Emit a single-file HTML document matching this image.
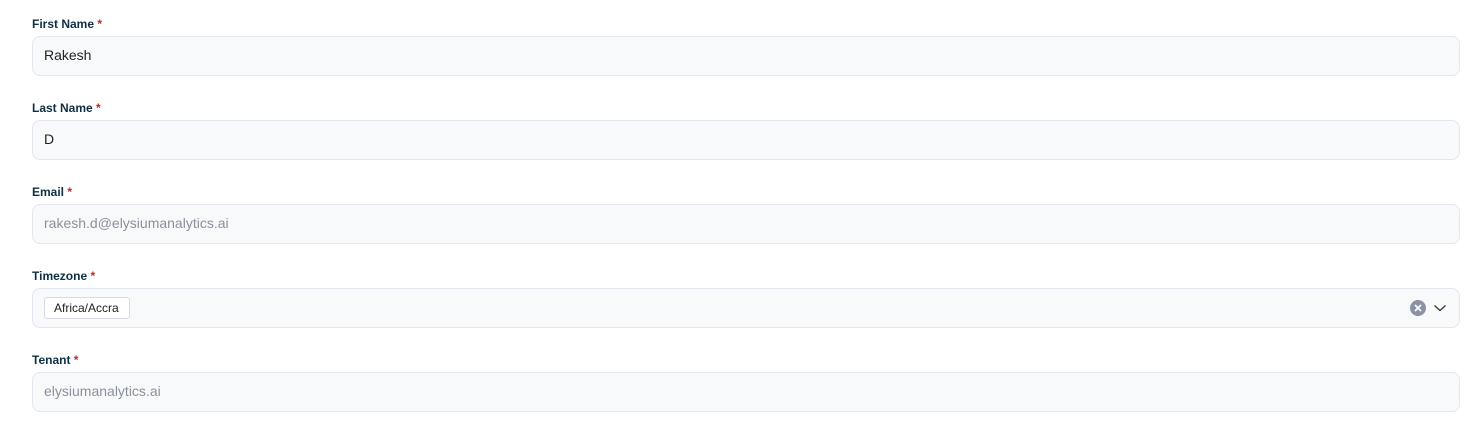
<!DOCTYPE html>
<html><head><style>
body{margin:0;background:#fff;font-family:"Liberation Sans",Arial,sans-serif;width:1470px;height:430px;overflow:hidden}
.f{position:absolute;left:32px;width:1428px}
.l{font-size:12px;font-weight:bold;color:#0f2f45;height:14px;line-height:14px}
.l span{color:#c0262d}
.i{position:absolute;top:19px;left:0;height:38px;border:1px solid #e3e5ee;border-radius:8px;background:#f8f9fb;font-size:14px;line-height:37px;padding-left:11px;box-sizing:content-box;width:1415px;color:#222}
.g{color:#8b919b}
.tag{position:absolute;left:11px;top:8px;height:20px;line-height:20px;border:1px solid #d8dbe3;border-radius:3px;background:#fff;font-size:12px;padding:0 10px 0 9px;color:#222}
</style></head><body>
<div class="f" style="top:17px"><div class="l">First Name <span>*</span></div><div class="i">Rakesh</div></div>
<div class="f" style="top:101px"><div class="l">Last Name <span>*</span></div><div class="i">D</div></div>
<div class="f" style="top:185px"><div class="l">Email <span>*</span></div><div class="i g">rakesh.d@elysiumanalytics.ai</div></div>
<div class="f" style="top:269px"><div class="l">Timezone <span>*</span></div><div class="i"><div class="tag">Africa/Accra</div>
<svg style="position:absolute;left:1377px;top:11px" width="16" height="16" viewBox="0 0 16 16"><circle cx="8" cy="8" r="8" fill="#8a92a3"/><path d="M5.5 5.5L10.5 10.5M10.5 5.5L5.5 10.5" stroke="#fff" stroke-width="1.8" stroke-linecap="round"/></svg>
<svg style="position:absolute;left:1400px;top:13px" width="14" height="12" viewBox="0 0 14 12"><path d="M1.5 3.5L7 8.5L12.5 3.5" stroke="#333" stroke-width="1.3" fill="none"/></svg>
</div></div>
<div class="f" style="top:353px"><div class="l">Tenant <span>*</span></div><div class="i g">elysiumanalytics.ai</div></div>
</body></html>
